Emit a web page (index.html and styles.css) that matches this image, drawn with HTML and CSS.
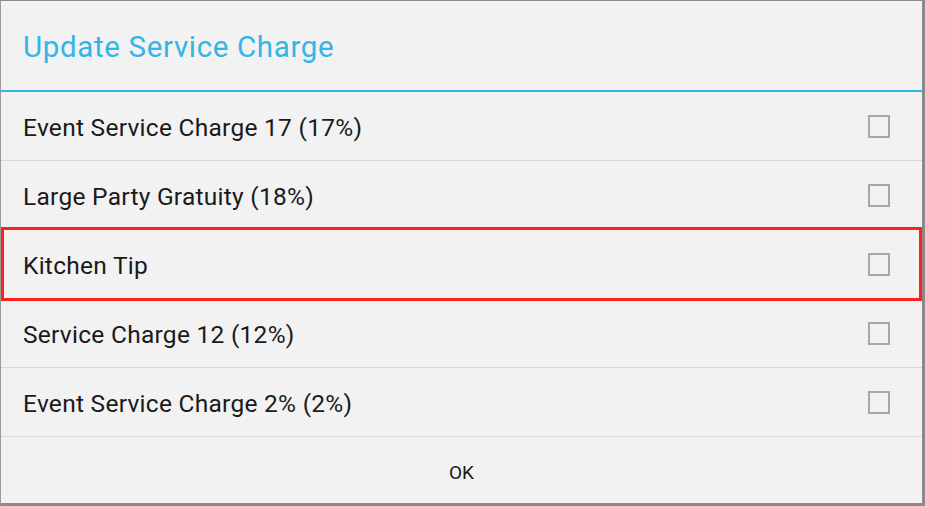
FILE: index.html
```html
<!DOCTYPE html>
<html>
<head>
<meta charset="utf-8">
<link rel="stylesheet" href="styles.css">
</head>
<body>
<div class="dialog">
  <div class="title">Update Service Charge</div>
  <div class="list">
    <div class="row"><span class="label">Event Service Charge 17 (17%)</span><span class="check"></span></div>
    <div class="row"><span class="label">Large Party Gratuity (18%)</span><span class="check"></span></div>
    <div class="row highlighted"><span class="label">Kitchen Tip</span><span class="check"></span></div>
    <div class="row"><span class="label">Service Charge 12 (12%)</span><span class="check"></span></div>
    <div class="row"><span class="label">Event Service Charge 2% (2%)</span><span class="check"></span></div>
  </div>
  <div class="footer"><span class="ok">OK</span></div>
</div>
</body>
</html>
```

FILE: styles.css
```css
html, body {
  margin: 0;
  padding: 0;
  background: #f2f2f2;
}
.dialog {
  width: 925px;
  height: 506px;
  box-sizing: border-box;
  background: #f2f2f2;
  border-top: 1px solid #8a8a8a;
  border-left: 1px solid #9a9a9a;
  border-right: 3px solid #8a8a8a;
  border-bottom: 3px solid #8a8a8a;
  display: flex;
  flex-direction: column;
  font-family: Roboto, "Noto Sans", sans-serif;
  position: relative;
}
.title {
  height: 91px;
  flex: none;
  box-sizing: border-box;
  padding-left: 22px;
  display: flex;
  align-items: center;
  font-size: 29.5px;
  letter-spacing: 0.65px;
  color: #33b5e5;
  border-bottom: 2px solid #33b5e5;
  padding-top: 2px;
}
.list {
  display: flex;
  flex-direction: column;
}
.row {
  height: 69px;
  box-sizing: border-box;
  border-bottom: 1px solid #d6d6d6;
  display: flex;
  align-items: center;
  justify-content: space-between;
  padding-left: 22px;
  padding-right: 32px;
  position: relative;
}
.label {
  font-size: 24.5px;
  letter-spacing: 0.27px;
  color: #1a1a1a;
  padding-top: 3px;
}
.check {
  width: 18px;
  height: 19px;
  border: 2px solid #a8a8a8;
  box-sizing: content-box;
}
.highlighted::after {
  content: "";
  position: absolute;
  left: 0;
  right: 0;
  top: -3px;
  bottom: -3px;
  border: 3px solid #ff1f1f;
  pointer-events: none;
}
.footer {
  flex: 1;
  display: flex;
  align-items: center;
  justify-content: center;
}
.ok {
  font-size: 19px;
  color: #1a1a1a;
  padding-top: 5px;
}
```
